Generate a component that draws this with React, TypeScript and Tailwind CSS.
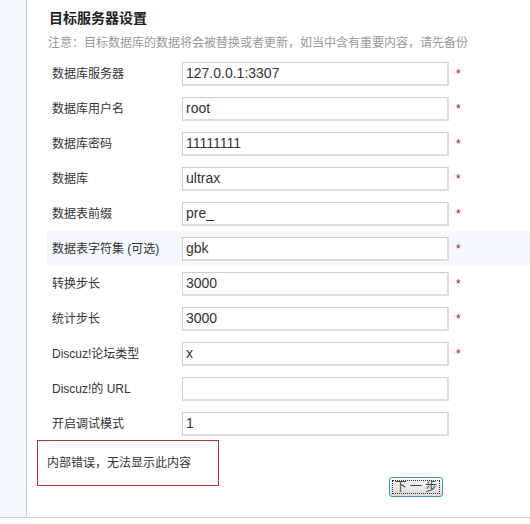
import React from 'react';

const rows = [
  { label: '数据库服务器', value: '127.0.0.1:3307', required: true },
  { label: '数据库用户名', value: 'root', required: true },
  { label: '数据库密码', value: '11111111', required: true },
  { label: '数据库', value: 'ultrax', required: true },
  { label: '数据表前缀', value: 'pre_', required: true },
  { label: '数据表字符集 (可选)', value: 'gbk', required: true, highlight: true },
  { label: '转换步长', value: '3000', required: true },
  { label: '统计步长', value: '3000', required: true },
  { label: 'Discuz!论坛类型', value: 'x', required: true },
  { label: 'Discuz!的 URL', value: '', required: false },
  { label: '开启调试模式', value: '1', required: false },
];

export default function App() {
  return (
    <div className="w-[530px] h-[524px] bg-white text-[#333] font-['Liberation_Sans','Noto_Sans_CJK_SC',sans-serif] overflow-hidden">
      <div className="flex h-[518px] border-b border-[#c5d5e2]">
        <div className="w-[27px] shrink-0 bg-[#f3f8fc] border-r border-[#c5d5e2]" />
        <div className="flex-1 pl-[20px]">
          <div className="mt-[8px] pl-[2px] text-[14px] leading-[20px] font-bold text-[#222]">目标服务器设置</div>
          <div className="mt-[7px] pl-[1px] text-[12px] leading-[16px] text-[#999] whitespace-nowrap">
            注意：目标数据库的数据将会被替换或者更新，如当中含有重要内容，请先备份
          </div>
          <div className="mt-[5px]">
            {rows.map((row, index) => (
              <div
                key={index}
                className={`flex items-center h-[35px] ${row.highlight ? 'bg-[#f3f8fc]' : ''}`}
              >
                <div className="w-[135px] pl-[5px] text-[12px] whitespace-nowrap">{row.label}</div>
                <div className="w-[267px] h-[24px] flex items-center pl-[3px] bg-white border border-[#cccccc] border-b-2 border-r-2 border-b-[#dddddd] border-r-[#dddddd] text-[14px] text-[#333]">
                  {row.value}
                </div>
                {row.required && (
                  <span className="ml-[7px] text-[12px] text-[#e00000] leading-none">*</span>
                )}
              </div>
            ))}
          </div>
          <div className="flex items-start">
            <div className="-ml-[10px] -mt-[1px] w-[182px] h-[46px] border border-[#b83030] flex items-center pl-[9px] text-[12px] whitespace-nowrap">
              内部错误，无法显示此内容
            </div>
            <button className="ml-[170px] mt-[36px] w-[54px] h-[20px] rounded-[3px] border border-[#3d94c6] bg-gradient-to-b from-[#fbfbfb] to-[#dcdcdc] p-[2px]">
              <span className="flex items-center justify-center h-full border border-dotted border-[#333] text-[12px] leading-none whitespace-pre text-[#444]">
                下 一 步
              </span>
            </button>
          </div>
        </div>
      </div>
    </div>
  );
}
